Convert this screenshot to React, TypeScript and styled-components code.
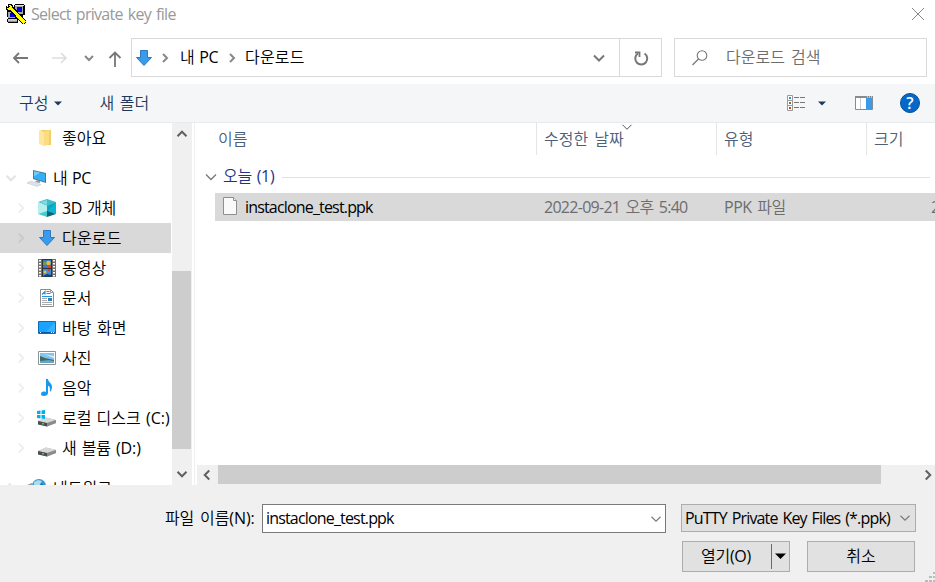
import React from 'react';
import styled, { createGlobalStyle } from 'styled-components';

const GlobalStyle = createGlobalStyle`
  * { box-sizing: border-box; }
  html, body { margin: 0; overflow: hidden; background: #fff; }
  body { font-family: "Open Sans", "Noto Sans CJK KR", sans-serif; font-size: 16px; color: #000; }
  svg { display: block; flex: none; }
`;

const Dialog = styled.div`
  width: 935px;
  height: 582px;
  display: flex;
  flex-direction: column;
  overflow: hidden;
  background: #fff;
`;

const Text = styled.span<{ $track?: number; $word?: number; $color?: string; $lift?: number }>`
  font-family: "Open Sans", "Noto Sans CJK KR DemiLight", "Noto Sans CJK KR Light", "Noto Sans CJK KR", sans-serif;
  font-size: 16px;
  letter-spacing: ${p => p.$track ?? 0}px;
  word-spacing: ${p => p.$word ?? 1}px;
  color: ${p => p.$color ?? 'inherit'};
  line-height: 20px;
  padding-bottom: ${p => (p.$lift ?? 0) * 2}px;
  white-space: pre;
`;

const TitleBar = styled.header`
  height: 28px;
  flex: none;
  display: flex;
  align-items: center;
  padding: 0 10px 0 6px;
  gap: 5px;
`;
const Grow = styled.div`flex: 1;`;

const NavBar = styled.nav`
  height: 56px;
  flex: none;
  display: flex;
  align-items: center;
  padding: 3px 8px 0 12px;
`;
const NavIcons = styled.div`
  width: 119px;
  display: flex;
  align-items: center;
`;
const AddressBar = styled.div`
  width: 531px;
  height: 39px;
  display: flex;
  align-items: center;
  border: 1px solid #d9d9d9;
  padding-left: 2px;
`;
const Crumb = styled.div<{ $width: number }>`
  width: ${p => p.$width}px;
  display: flex;
`;
const RefreshCell = styled.div`
  width: 42px;
  height: 37px;
  display: flex;
  align-items: center;
  justify-content: center;
  border-left: 1px solid #d9d9d9;
`;
const SearchBox = styled.div`
  flex: 1;
  height: 39px;
  margin-left: 12px;
  padding-left: 16px;
  display: flex;
  align-items: center;
  gap: 17px;
  border: 1px solid #d9d9d9;
`;

const Toolbar = styled.div`
  height: 39px;
  flex: none;
  display: flex;
  align-items: center;
  padding: 0 15px 0 19px;
  background: #f5f6f7;
  border-bottom: 1px solid #e8eaec;
  color: #1e395b;
`;
const Gap = styled.div<{ $w: number }>`width: ${p => p.$w}px; flex: none;`;

const Body = styled.main`
  height: 362px;
  flex: none;
  display: flex;
  overflow: hidden;
`;
const Tree = styled.aside`
  width: 171px;
  display: flex;
  flex-direction: column;
  overflow: hidden;
`;
const TreeRow = styled.div<{ $selected?: boolean; $spaced?: boolean; $level: number }>`
  height: 30px;
  flex: none;
  margin-top: ${p => (p.$spaced ? 10 : 0)}px;
  display: flex;
  align-items: center;
  padding-left: ${p => (p.$level === 0 ? 4 : 14)}px;
  background: ${p => (p.$selected ? '#d9d9d9' : 'transparent')};
`;
const Twisty = styled.span`width: 14px; height: 14px; display: flex;`;
const TreeIcon = styled.span<{ $level: number }>`
  width: 20px;
  margin: 0 ${p => (p.$level === 0 ? 6 : 5)}px 0 9px;
  display: flex;
  flex: none;
`;
const VScroll = styled.div`
  width: 20px;
  margin-left: 1px;
  display: flex;
  flex-direction: column;
  background: #f0f0f0;
`;
const ArrowCell = styled.div<{ $w: number; $h: number }>`
  width: ${p => p.$w}px;
  height: ${p => p.$h}px;
  flex: none;
  display: flex;
  align-items: center;
  justify-content: center;
`;
const VTrack = styled.div`
  flex: 1;
  padding-top: 127px;
`;
const VThumb = styled.div`width: 19px; height: 178px; background: #cdcdcd;`;

const FilePane = styled.section`
  flex: 1;
  min-width: 0;
  margin-left: 2px;
  border-left: 1px solid #f0f0f0;
  display: flex;
  flex-direction: column;
`;
const ColumnHeader = styled.div`
  height: 32px;
  flex: none;
  display: flex;
  padding-left: 16px;
`;
const Column = styled.div<{ $w: number }>`
  width: ${p => p.$w}px;
  flex: none;
  position: relative;
  display: flex;
  align-items: center;
  padding-left: 7px;
  border-right: 1px solid #e5e5e5;
`;
const SortMark = styled.span`position: absolute; left: 83px; top: -3px;`;
const GroupRow = styled.div`
  height: 38px;
  flex: none;
  display: flex;
  align-items: center;
  padding: 5px 5px 0 9px;
`;
const Rule = styled.div`flex: 1; height: 1px; margin: 1px 0 0 8px; background: #e2e2e2;`;
const FileRow = styled.div`
  height: 28px;
  flex: none;
  margin-left: 20px;
  display: flex;
  align-items: center;
  padding-left: 7px;
  background: #d9d9d9;
  overflow: hidden;
`;
const Cell = styled.div<{ $w: number }>`width: ${p => p.$w}px; flex: none; display: flex; align-items: center;`;
const HScroll = styled.div`
  height: 20px;
  flex: none;
  margin: auto 0 0 2px;
  display: flex;
  background: #f0f0f0;
`;
const HThumb = styled.div`width: 663px; height: 19px; background: #cdcdcd;`;

const Footer = styled.footer`
  flex: 1;
  position: relative;
  display: flex;
  flex-direction: column;
  background: #f0f0f0;
`;
const FieldRow = styled.div`
  display: flex;
  padding: 19px 0 0 165px;
`;
const Label = styled.label`width: 97px; height: 29px; display: flex; align-items: center;`;
const NameField = styled.div`
  width: 404px;
  height: 29px;
  display: flex;
  align-items: center;
  justify-content: space-between;
  padding: 0 2px 0 3px;
  background: #fff;
  border: 1px solid #7a7a7a;
`;
const FilterSelect = styled.div`
  width: 235px;
  height: 28px;
  margin-left: 15px;
  display: flex;
  align-items: center;
  justify-content: space-between;
  padding: 0 3px;
  background: #e1e1e1;
  border: 1px solid #adadad;
`;
const ButtonRow = styled.div`
  display: flex;
  justify-content: flex-end;
  gap: 17px;
  padding: 8px 20px 0 0;
`;
const Button = styled.div`
  width: 108px;
  height: 31px;
  display: flex;
  align-items: center;
  justify-content: center;
  background: #e1e1e1;
  border: 1px solid #adadad;
`;
const SplitMain = styled.div`flex: 1; display: flex; justify-content: center; padding-right: 2px;`;
const SplitArrow = styled.div`
  width: 18px;
  height: 25px;
  display: flex;
  align-items: center;
  justify-content: center;
  border-left: 1px solid #696969;
`;
const Grip = styled.span`position: absolute; right: 0; bottom: 0;`;

type ChevronProps = { dir: 'up' | 'down' | 'left' | 'right'; w?: number; color?: string; stroke?: number };
const turns = { down: 0, left: 90, up: 180, right: 270 };
const Chevron = ({ dir, w = 10, color = '#777', stroke = 2 }: ChevronProps) => (
  <svg width={14} height={14} viewBox="0 0 14 14">
    <path
      d={`M${7 - w / 2} ${7 - w / 4}L7 ${7 + w / 4}L${7 + w / 2} ${7 - w / 4}`}
      fill="none" stroke={color} strokeWidth={stroke} transform={`rotate(${turns[dir]} 7 7)`}
    />
  </svg>
);
const Caret = ({ color = '#1e395b', w = 8 }) => (
  <svg width={w} height={w / 2 + 1} viewBox={`0 0 ${w} ${w / 2 + 1}`}><path d={`M0 .5H${w}L${w / 2} ${w / 2 + 0.5}Z`} fill={color} /></svg>
);

const PuttyIcon = () => (
  <svg width="20" height="20" viewBox="0 0 20 20" shapeRendering="crispEdges">
    <path d="M9 0h9v1h1v10h-2v2h-6V9H8V1h1z" fill="#000" />
    <path d="M9 1h9v1h-9z" fill="#e4e4e4" /><path d="M9 2h8v8H9z" fill="#a5a5a5" /><path d="M11 3h5v5h-5z" fill="#0000e6" />
    <path d="M1 7h9v7h2v5H2v-1H1v-3h1v-2H1z" fill="#000" />
    <path d="M2 8h7v6H2z" fill="#a5a5a5" /><path d="M4 9h5v4H4z" fill="#0000e6" />
    <path d="M2 15h9v3H2z" fill="#c9c9c9" /><path d="M2 17h9v1H2z" fill="#8e8e8e" />
    <path d="M5 4.500L17.500 17.500" stroke="#000" strokeWidth="5.200" strokeLinecap="square" />
    <path d="M2 0h4v1h1v5H5v1H1V6H0V2h1v1h1z" fill="#000" />
    <path d="M3 1h2v1h1v3H5v1H2V5H1V4h2V3h1V2H3z" fill="#ff0" />
    <path d="M5 4.500L17.500 17.500" stroke="#ff0" strokeWidth="3.200" strokeLinecap="square" />
    <path d="M10 8l2-1v2zM14 12l2-2 1 1-1 2z" fill="#000" />
  </svg>
);
const DownloadArrow = () => (
  <svg width="20" height="20" viewBox="0 0 20 20">
    <path d="M6.500 2.500h7v7h4L10 17.500 2.500 9.500h4z" fill="#3a9bea" stroke="#2b79c2" />
  </svg>
);
const FolderIcon = () => (
  <svg width="20" height="20" viewBox="0 0 20 20">
    <path d="M4 2h10v15H7z" fill="#f3cf68" /><path d="M2 2l5 2v14l-5-2z" fill="#ffe69c" /><path d="M7 4l5-2v14l-5 2z" fill="#fbdc83" />
  </svg>
);
const PcIcon = () => (
  <svg width="20" height="20" viewBox="0 0 20 20">
    <path d="M6 2l13 3v10L6 11z" fill="#4a7896" /><path d="M7 3.200l11 2.600v8L7 10.200z" fill="#36aef4" /><path d="M7 3.200l6 1.400-6 4z" fill="#70cdfb" />
    <path d="M10 12l3 1v2l-5-1z" fill="#8e9ba5" /><path d="M0 15l4-2 10 3.500-4 2z" fill="#dfe2e7" stroke="#bcc1ca" strokeWidth=".5" />
  </svg>
);
const CubeIcon = () => (
  <svg width="20" height="20" viewBox="0 0 20 20">
    <path d="M1 4l9-3 9 3-9 4z" fill="#3dbccc" /><path d="M3 4l7-2v5z" fill="#7fdde2" />
    <path d="M1 4l9 4v6l-9 2z" fill="#b5efee" /><path d="M10 8l9-4v12l-9-2z" fill="#0cb5d3" /><path d="M10 8l9-4-9 10z" fill="#11a3bb" />
    <path d="M1 16l9-3v6z" fill="#4cc9d0" /><path d="M10 13l9 3-9 3z" fill="#08677c" />
  </svg>
);
const FilmIcon = () => (
  <svg width="20" height="20" viewBox="0 0 20 20">
    <path d="M1 1h18v18H1z" fill="#333" />
    <path d="M1 1h4v18H1zM15 1h4v18h-4z" fill="#707070" />
    {[2, 5, 8, 11, 14, 17].map(y => <path key={y} d={`M2 ${y}h2v1.500H2zM16 ${y}h2v1.500h-2z`} fill="#fff" />)}
    <path d="M6 2h8v8H6z" fill="#3a78c8" /><path d="M6 11h8v8H6z" fill="#3a8fe0" />
    <circle cx="11.500" cy="5" r="2.300" fill="#e9bb32" /><path d="M6 4h3v3H6z" fill="#6d9e3c" /><path d="M10 7h4v2h-4z" fill="#d44a32" />
    <circle cx="8" cy="14" r="1.500" fill="#efc52b" /><path d="M11 11h2v2h-2z" fill="#da3f36" /><path d="M6 18l4-2 4 1v2H6z" fill="#213e62" />
  </svg>
);
const DocIcon = () => (
  <svg width="20" height="20" viewBox="0 0 20 20">
    <path d="M3.500 1.500h10l3 3v14h-13z" fill="#fff" stroke="#8d8d8d" /><path d="M13.500 1.500v3h3" fill="none" stroke="#999" />
    <path d="M5 6.500l3-3v3M9.500 3.500h3M9.500 5.500h4M5 8.500h10" fill="none" stroke="#2994d6" strokeWidth="1.200" />
    <path d="M5 10.500h5M5 12.500h5M5 14.500h10M5 16.500h10" stroke="#aaa" /><path d="M11 10h4v3h-4z" fill="#2b80bc" />
  </svg>
);
const DesktopIcon = () => (
  <svg width="20" height="20" viewBox="0 0 20 20">
    <path d="M1.500 3.500h17v12h-17z" fill="#18a3ff" stroke="#096ebc" /><path d="M18 4v10L9 14z" fill="#35b1ff" /><path d="M2 14h16v1H2z" fill="#075b9d" /><path d="M3 14h1v1H3zM14 14h1v1h-1zM16 14h1v1h-1z" fill="#fff" />
  </svg>
);
const PictureIcon = () => (
  <svg width="20" height="20" viewBox="0 0 20 20">
    <path d="M1.500 3.500h17v13h-17z" fill="#fff" stroke="#929292" /><path d="M3 5h14v10H3z" fill="#83c4ef" /><path d="M7 6l4 1 6 1v2z" fill="#daeffc" />
    <path d="M3 8l5 2 9 2v1H3z" fill="#396d61" /><path d="M3 13l9-1 5 1v2H3z" fill="#6ba3c8" />
  </svg>
);
const MusicIcon = () => (
  <svg width="20" height="20" viewBox="0 0 20 20">
    <path d="M9 1h2c0 3 4 4 4 8 0 2-1 4-2 5 0-4 0-6-2-6v7c0 2-2 3-4 3s-3-1-3-2c0-2 2-3 5-2z" fill="#139bed" />
  </svg>
);
const DriveIcon = ({ windows = false }) => (
  <svg width="20" height="20" viewBox="0 0 20 20">
    <path d="M1 13l8-3.500L19 12v3l-9 3.500L1 16z" fill="#aaa" /><path d="M1 13l8-3.500L19 12l-9 3z" fill="#d8d8d8" /><path d="M1 13l9 2v3.500L1 16.500z" fill="#4d4d4d" /><path d="M10 15l9-3v3l-9 3.500z" fill="#8b8b8b" /><path d="M5 15h2v1.500H5z" fill="#38c878" />
    {windows && <path d="M0 3l3.500-.5V6H0zM4.500 2.500L8 2v4H4.500zM0 7h3.500v3.500L0 10zM4.500 7H8v4l-3.500-.5z" fill="#00adef" />}
  </svg>
);
const NetworkIcon = () => (
  <svg width="20" height="20" viewBox="0 0 20 20">
    <circle cx="12" cy="8" r="7" fill="#3b98cc" /><path d="M7 4l4-2 4 1-3 5-5 1z" fill="#a9dcef" /><path d="M14 5l4 3-2 5-3-3z" fill="#176da4" /><path d="M0 7l5-2v5z" fill="#999" />
  </svg>
);
const FileIcon = () => (
  <svg width="17" height="20" viewBox="0 0 17 20">
    <path d="M1.500 .500h10l3 3v14h-13z" fill="#fafafa" stroke="#8f8f8f" /><path d="M11.500 .500v3h3" fill="#eee" stroke="#8f8f8f" />
  </svg>
);
const NavArrow = ({ up = false, color = '#777' }) => (
  <svg width="18" height="18" viewBox="0 0 18 18">
    <path d={up ? 'M9 18V3.500M3.500 9L9 3.500 14.500 9' : 'M16 9H2M7 4L2 9l5 5'} fill="none" stroke={color} strokeWidth="1.800" />
  </svg>
);
const ForwardArrow = () => (
  <svg width="18" height="18" viewBox="0 0 18 18"><path d="M2 9h14M11 4l5 5-5 5" fill="none" stroke="#ddd" strokeWidth="1.600" /></svg>
);
const RefreshIcon = () => (
  <svg width="18" height="18" viewBox="0 0 18 18">
    <path d="M12.500 4.500A6 6 0 1 1 6 4.500" fill="none" stroke="#777" strokeWidth="2" /><path d="M3 3.500h4.500V8" fill="none" stroke="#777" strokeWidth="1.800" />
  </svg>
);
const SearchIcon = () => (
  <svg width="18" height="18" viewBox="0 0 18 18"><circle cx="11" cy="6.500" r="4.800" fill="none" stroke="#777" strokeWidth="1.100" /><path d="M7.500 10L1.500 16" stroke="#777" strokeWidth="1.300" /></svg>
);
const ViewIcon = () => (
  <svg width="18" height="16" viewBox="0 0 18 16">
    {[0, 5, 10].map((y, i) => (
      <g key={y}>
        <path d={`M.5 ${y + 0.5}h5v5h-5z`} fill="#fff" stroke="#999" /><path d={`M2 ${y + 2}h2v2H2z`} fill={['#3b8fbd', '#6b7d20', '#c24518'][i]} />
        <path d={`M7 ${y + 2.500}h5M13 ${y + 2.500}h5`} stroke="#777" />
      </g>
    ))}
  </svg>
);
const PreviewIcon = () => (
  <svg width="18" height="14" viewBox="0 0 18 14">
    <path d="M.5.500h17v13H.5z" fill="#fff" stroke="#858b91" /><path d="M0 0h18v2H0z" fill="#858b91" /><path d="M12 .500h1v1h-1zM14 .500h1v1h-1zM16 .500h1v1h-1z" fill="#fff" /><path d="M5.500 2v11" stroke="#ccc" /><path d="M11 2h6v11h-6z" fill="#3a9bea" />
  </svg>
);
const HelpBadge = styled.div`
  width: 20px;
  height: 20px;
  border-radius: 50%;
  border: 1px solid #064f94;
  background: #0568c8;
  color: #fff;
  font: 600 16px/18px "Open Sans", sans-serif;
  text-align: center;
`;

type Item = { name: string; icon: React.ReactNode; level: number; selected?: boolean; spaced?: boolean; twisty?: 'down' | 'right'; track?: number };
const items: Item[] = [
  { name: '좋아요', icon: <FolderIcon />, level: 1 },
  { name: '내 PC', icon: <PcIcon />, level: 0, spaced: true, twisty: 'down', track: -0.4 },
  { name: '3D 개체', icon: <CubeIcon />, level: 1, twisty: 'right', track: -0.3 },
  { name: '다운로드', icon: <DownloadArrow />, level: 1, twisty: 'right', selected: true, track: 0.2 },
  { name: '동영상', icon: <FilmIcon />, level: 1, twisty: 'right' },
  { name: '문서', icon: <DocIcon />, level: 1, twisty: 'right' },
  { name: '바탕 화면', icon: <DesktopIcon />, level: 1, twisty: 'right', track: 0.1 },
  { name: '사진', icon: <PictureIcon />, level: 1, twisty: 'right' },
  { name: '음악', icon: <MusicIcon />, level: 1, twisty: 'right' },
  { name: '로컬 디스크 (C:)', icon: <DriveIcon windows />, level: 1, twisty: 'right' },
  { name: '새 볼륨 (D:)', icon: <DriveIcon />, level: 1, twisty: 'right', track: -0.1 },
  { name: '네트워크', icon: <NetworkIcon />, level: 0, spaced: true, twisty: 'right' },
];

export default function App() {
  return (
    <Dialog>
      <GlobalStyle />
      <TitleBar>
        <PuttyIcon />
        <Text $color="#999" $track={-0.72} $word={1.6}>Select private key file</Text>
        <Grow />
        <svg width="14" height="14" viewBox="0 0 14 14"><path d="M1 1l12 12M13 1L1 13" stroke="#888" /></svg>
      </TitleBar>
      <NavBar>
        <NavIcons>
          <NavArrow /><Gap $w={20} /><ForwardArrow /><Gap $w={14} /><Chevron dir="down" w={8} color="#888" /><Gap $w={10} /><NavArrow up />
        </NavIcons>
        <AddressBar>
          <DownloadArrow /><Gap $w={4} /><Chevron dir="right" w={8} color="#888" />
          <Gap $w={8} />
          <Crumb $width={45}><Text $lift={1} $track={-0.3}>내 PC</Text></Crumb>
          <Chevron dir="right" w={8} color="#888" />
          <Gap $w={6} />
          <Text $lift={1} $track={0.2}>다운로드</Text>
          <Grow />
          <Chevron dir="down" /><Gap $w={13} />
          <RefreshCell><RefreshIcon /></RefreshCell>
        </AddressBar>
        <SearchBox><SearchIcon /><Text $color="#6d6d6d" $lift={1} $word={2}>다운로드 검색</Text></SearchBox>
      </NavBar>
      <Toolbar>
        <Text>구성</Text><Gap $w={6} /><Caret /><Gap $w={37} />
        <Text $word={1.5}>새 폴더</Text>
        <Grow />
        <ViewIcon /><Gap $w={13} /><Caret /><Gap $w={29} /><PreviewIcon /><Gap $w={27} />
        <HelpBadge>?</HelpBadge>
      </Toolbar>
      <Body>
        <Tree>
          {items.map(item => (
            <TreeRow key={item.name} $level={item.level} $selected={item.selected} $spaced={item.spaced}>
              <Twisty>{item.twisty && <Chevron dir={item.twisty} w={9} color={item.selected ? '#cacaca' : item.level ? '#f0f0f0' : '#e3e3e3'} />}</Twisty>
              <TreeIcon $level={item.level}>{item.icon}</TreeIcon>
              <Text $track={item.track}>{item.name}</Text>
            </TreeRow>
          ))}
        </Tree>
        <VScroll>
          <ArrowCell $w={19} $h={21}><Chevron dir="up" w={9} color="#606060" /></ArrowCell>
          <VTrack><VThumb /></VTrack>
          <ArrowCell $w={19} $h={22}><Chevron dir="down" w={9} color="#606060" /></ArrowCell>
        </VScroll>
        <FilePane>
          <ColumnHeader>
            <Column $w={326}><Text $color="#4c607a">이름</Text></Column>
            <Column $w={180}><Text $color="#4c607a" $word={2}>수정한 날짜</Text><SortMark><Chevron dir="down" color="#555" stroke={1} w={9} /></SortMark></Column>
            <Column $w={150}><Text $color="#4c607a">유형</Text></Column>
            <Column $w={80}><Text $color="#4c607a">크기</Text></Column>
          </ColumnHeader>
          <GroupRow>
            <Chevron dir="down" stroke={1.3} /><Gap $w={5} /><Text $color="#1e3287" $track={-0.3} $lift={0.5}>오늘 (1)</Text><Rule />
          </GroupRow>
          <FileRow>
            <FileIcon /><Gap $w={6} />
            <Cell $w={299}><Text $track={-0.83}>instaclone_test.ppk</Text></Cell>
            <Cell $w={180}><Text $color="#6d6d6d" $track={-0.72} $word={1.8}>2022-09-21 오후 5:40</Text></Cell>
            <Cell $w={207}><Text $color="#6d6d6d" $track={-0.5} $word={2}>PPK 파일</Text></Cell>
            <Cell $w={30}><Text $color="#6d6d6d">2KB</Text></Cell>
          </FileRow>
          <HScroll>
            <ArrowCell $w={21} $h={19}><Chevron dir="left" w={9} color="#606060" /><Gap $w={2} /></ArrowCell>
            <HThumb />
            <Grow />
            <ArrowCell $w={14} $h={19}><Chevron dir="right" w={9} color="#606060" /></ArrowCell>
          </HScroll>
        </FilePane>
      </Body>
      <Footer>
        <FieldRow>
          <Label><Text $track={-0.1} $word={1.8} $lift={1}>파일 이름(N):</Text></Label>
          <NameField><Text $track={-0.83} $lift={1}>instaclone_test.ppk</Text><Chevron dir="down" stroke={1.1} w={9} /></NameField>
          <FilterSelect><Text $track={-0.83} $word={1.5}>PuTTY Private Key Files (*.ppk)</Text><Chevron dir="down" stroke={1.1} w={9} /></FilterSelect>
        </FieldRow>
        <ButtonRow>
          <Button><SplitMain><Text $track={-0.3} $lift={1}>열기(O)</Text></SplitMain><SplitArrow><Caret color="#000" w={11} /></SplitArrow></Button>
          <Button><Text $lift={1}>취소</Text></Button>
        </ButtonRow>
        <Grip>
          <svg width="10" height="10" viewBox="0 0 10 10"><path d="M8 0h2v2H8zM4 4h3v2H4zM8 4h2v2H8zM0 8h3v2H0zM4 8h3v2H4zM8 8h2v2H8z" fill="#bbb" /></svg>
        </Grip>
      </Footer>
    </Dialog>
  );
}
